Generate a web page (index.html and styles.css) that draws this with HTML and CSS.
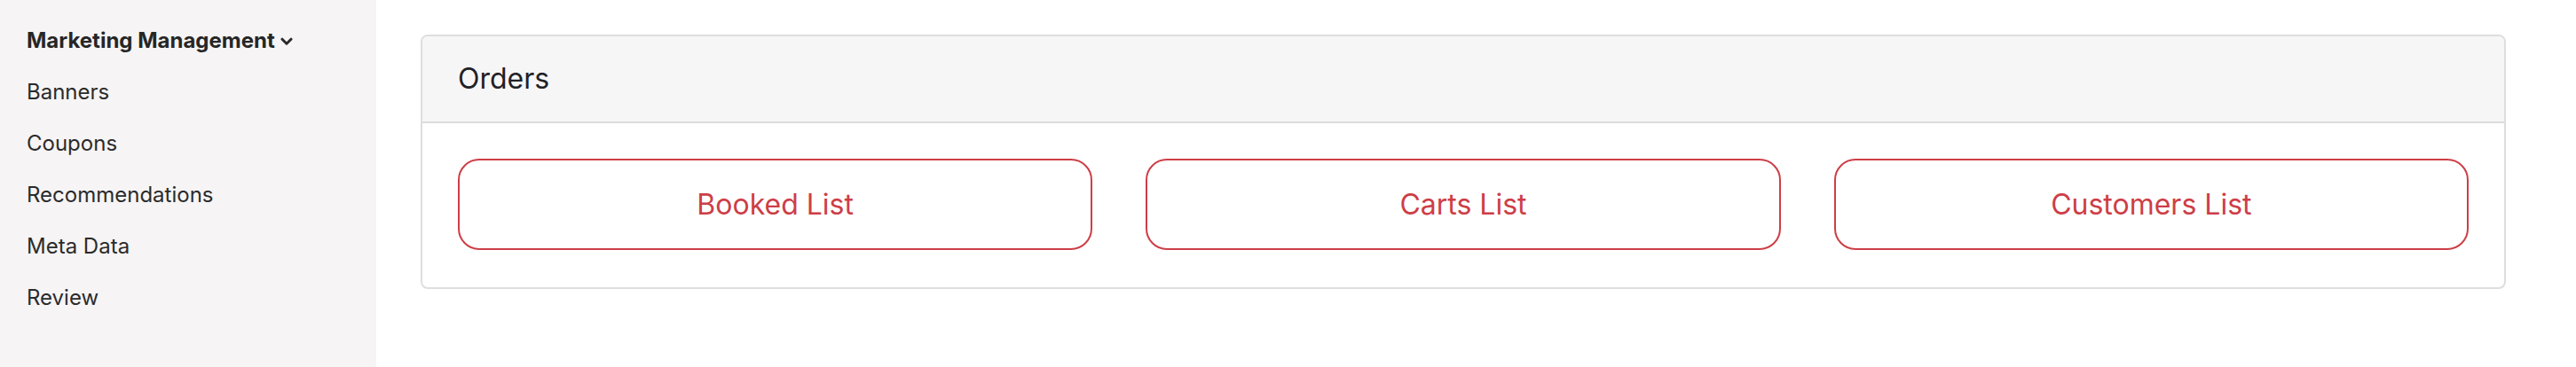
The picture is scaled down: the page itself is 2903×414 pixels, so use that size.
FILE: index.html
```html
<!DOCTYPE html>
<html lang="en">
<head>
<meta charset="utf-8">
<title>Orders</title>
<link rel="stylesheet" href="styles.css">
</head>
<body>
<div class="layout">
  <aside class="sidebar">
    <div class="nav-heading">Marketing Management
      <svg class="chevron" width="14" height="10" viewBox="0 0 14 10" aria-hidden="true"><path d="M2 2.2l5 5 5-5" fill="none" stroke="#2a2a2a" stroke-width="3" stroke-linecap="round" stroke-linejoin="round"/></svg>
    </div>
    <ul class="nav-list">
      <li class="nav-item">Banners</li>
      <li class="nav-item">Coupons</li>
      <li class="nav-item">Recommendations</li>
      <li class="nav-item">Meta Data</li>
      <li class="nav-item">Review</li>
    </ul>
  </aside>
  <main class="main">
    <section class="card">
      <header class="card-header">Orders</header>
      <div class="card-body">
        <a class="btn-outline">Booked List</a>
        <a class="btn-outline">Carts List</a>
        <a class="btn-outline">Customers List</a>
      </div>
    </section>
  </main>
</div>
</body>
</html>
```

FILE: styles.css
```css
html, body {
  margin: 0;
  padding: 0;
  background: #ffffff;
  font-family: Inter, "Noto Sans", "Liberation Sans", sans-serif;
}

.layout {
  display: flex;
  min-height: 414px;
}

.sidebar {
  width: 424px;
  flex: 0 0 424px;
  background: #f6f4f5;
  padding: 17px 0 0 30px;
  box-sizing: border-box;
  color: #2b2b2b;
}

.nav-heading {
  font-size: 24px;
  font-weight: 700;
  line-height: 58px;
  display: flex;
  align-items: center;
  gap: 6px;
  color: #262626;
}

.chevron {
  display: block;
  margin-top: 1px;
}

.nav-list {
  list-style: none;
  margin: 0;
  padding: 0;
}

.nav-item {
  font-size: 24px;
  line-height: 58px;
  color: #2b2b2b;
}

.main {
  flex: 1;
  padding: 39px 79px 0 50px;
}

.card {
  border: 2px solid #dedede;
  border-radius: 8px;
  overflow: hidden;
  background: #ffffff;
}

.card-header {
  background: #f6f6f6;
  border-bottom: 2px solid #dcdcdc;
  padding: 28px 40px;
  font-size: 32px;
  line-height: 40px;
  color: #1f2226;
}

.card-body {
  display: grid;
  grid-template-columns: repeat(3, 1fr);
  gap: 60px;
  padding: 40px 40px 42px 40px;
}

.btn-outline {
  display: flex;
  align-items: center;
  justify-content: center;
  height: 103px;
  box-sizing: border-box;
  border: 2px solid #cd3e47;
  border-radius: 24px;
  color: #cd3e47;
  font-size: 32px;
  text-decoration: none;
}
```
